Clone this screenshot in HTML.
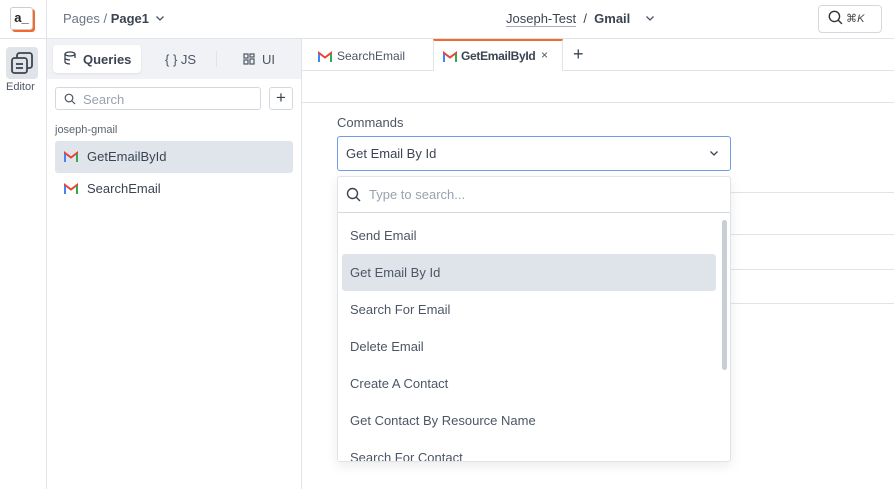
<!DOCTYPE html>
<html><head><style>
*{margin:0;padding:0;box-sizing:border-box}
body{width:894px;height:489px;overflow:hidden;background:#fff;font-family:"Liberation Sans",sans-serif;color:#4c5664;position:relative;font-size:13px}
.a{position:absolute}
.hl{position:absolute;background:#e0e3e8;height:1px}
.vl{position:absolute;background:#e0e3e8;width:1px}
.it{position:absolute;left:350px;font-size:13px;color:#4c5664}
</style></head><body>
<div class="hl" style="left:0;top:38px;width:894px"></div>
<div class="a" style="left:10px;top:7px;width:23px;height:23px;border:1px solid #ccc;border-radius:3px;background:#fff;box-shadow:2px 2px 0 #f26b2c;font-size:13px;font-weight:bold;color:#222;text-align:center;line-height:20px">a_</div>
<div class="vl" style="left:46px;top:0;height:489px"></div>
<div class="a" style="left:63px;top:11px;font-size:13px;color:#6a7585">Pages / <b style="color:#3b4452">Page1</b></div>
<svg class="a" style="left:155px;top:15px" width="10" height="7" viewBox="0 0 10 7"><path d="M1.5 1.5l3.5 3.5 3.5-3.5" fill="none" stroke="#4c5664" stroke-width="1.3"/></svg>
<div class="a" style="left:506px;top:11px;font-size:13px;color:#3b4452"><span style="border-bottom:1px solid #aab">Joseph-Test</span> &nbsp;/&nbsp; <b>Gmail</b></div>
<svg class="a" style="left:645px;top:15px" width="10" height="7" viewBox="0 0 10 7"><path d="M1.5 1.5l3.5 3.5 3.5-3.5" fill="none" stroke="#4c5664" stroke-width="1.3"/></svg>
<div class="a" style="left:818px;top:5px;width:64px;height:28px;border:1px solid #d5d9df;border-radius:4px;font-size:11px;color:#444;line-height:26px;padding-left:9px">
<svg width="15" height="15" viewBox="0 0 14 14" style="vertical-align:-3px"><circle cx="6" cy="6" r="4.8" fill="none" stroke="#333" stroke-width="1.3"/><line x1="9.5" y1="9.5" x2="13" y2="13" stroke="#333" stroke-width="1.3"/></svg> ⌘<i>K</i></div>
<div class="a" style="left:6px;top:47px;width:32px;height:32px;background:#e0e3e8;border-radius:4px"></div>
<svg class="a" style="left:10px;top:51px" width="24" height="24" viewBox="0 0 24 24" fill="none" stroke="#3b4452" stroke-width="1.8"><rect x="2" y="7" width="15" height="15" rx="2.5"/><path d="M7 7V4.5A2.5 2.5 0 0 1 9.5 2h10A2.5 2.5 0 0 1 22 4.5v10a2.5 2.5 0 0 1-2.5 2.5H17"/><line x1="6" y1="13" x2="13" y2="13"/><line x1="6" y1="17" x2="13" y2="17"/></svg>
<div class="a" style="left:6px;top:81px;font-size:11px;color:#4c5664">Editor</div>
<div class="vl" style="left:301px;top:38px;height:451px"></div>
<div class="a" style="left:47px;top:39px;width:254px;height:40px;background:#f0f2f5"></div>
<div class="a" style="left:53px;top:45px;width:88px;height:28px;background:#fff;border-radius:4px;box-shadow:0 1px 2px rgba(0,0,0,.08)"></div>
<svg class="a" style="left:64px;top:51px" width="14" height="14" viewBox="0 0 14 14" fill="none" stroke="#3b4452" stroke-width="1.3"><ellipse cx="6" cy="3" rx="5" ry="2"/><path d="M1 3v8c0 1.1 2.2 2 5 2M11 3v4M1 7c0 1.1 2.2 2 5 2"/></svg>
<div class="a" style="left:83px;top:52px;font-size:13px;font-weight:bold;color:#3b4452">Queries</div>
<div class="a" style="left:165px;top:52px;font-size:13px;color:#4c5664">{ } JS</div>
<div class="vl" style="left:216px;top:51px;height:16px"></div>
<svg class="a" style="left:243px;top:53px" width="12" height="12" viewBox="0 0 12 12" fill="none" stroke="#4c5664" stroke-width="1.2"><rect x="1" y="1" width="4" height="4"/><rect x="7" y="1" width="4" height="3"/><rect x="1" y="7" width="4" height="4"/><rect x="7" y="6" width="4" height="5"/></svg>
<div class="a" style="left:262px;top:52px;font-size:13px;color:#4c5664">UI</div>
<div class="a" style="left:55px;top:87px;width:206px;height:23px;border:1px solid #d5d9df;border-radius:3px"></div>
<svg class="a" style="left:64px;top:93px" width="12" height="12" viewBox="0 0 12 12" fill="none" stroke="#4c5664" stroke-width="1.2"><circle cx="5" cy="5" r="3.8"/><line x1="8" y1="8" x2="11" y2="11"/></svg>
<div class="a" style="left:83px;top:92px;font-size:13px;color:#99a2ae">Search</div>
<div class="a" style="left:269px;top:87px;width:24px;height:23px;border:1px solid #d5d9df;border-radius:3px;text-align:center;line-height:20px;font-size:17px;color:#3b4452">+</div>
<div class="a" style="left:55px;top:124px;font-size:11px;color:#5b6573">joseph-gmail</div>
<div class="a" style="left:55px;top:141px;width:238px;height:32px;background:#e0e5ec;border-radius:3px"></div>
<svg class="a" style="left:64px;top:151px" width="14" height="11" viewBox="0 0 14 11"><path d="M1 11V2l6 4.5L13 2v9" fill="none" stroke="#ea4335" stroke-width="2"/><path d="M1 3v8" stroke="#4285f4" stroke-width="2"/><path d="M13 3v8" stroke="#34a853" stroke-width="2"/></svg>
<div class="a" style="left:87px;top:149px;font-size:13px;color:#3b4452">GetEmailById</div>
<svg class="a" style="left:64px;top:183px" width="14" height="11" viewBox="0 0 14 11"><path d="M1 11V2l6 4.5L13 2v9" fill="none" stroke="#ea4335" stroke-width="2"/><path d="M1 3v8" stroke="#4285f4" stroke-width="2"/><path d="M13 3v8" stroke="#34a853" stroke-width="2"/></svg>
<div class="a" style="left:87px;top:181px;font-size:13px;color:#3b4452">SearchEmail</div>
<div class="hl" style="left:302px;top:70px;width:592px"></div>
<div class="a" style="left:433px;top:39px;width:130px;height:32px;background:#fff;border-left:1px solid #e0e3e8;border-right:1px solid #e0e3e8;border-top:2px solid #f26b2c"></div>
<svg class="a" style="left:318px;top:51px" width="14" height="11" viewBox="0 0 14 11"><path d="M1 11V2l6 4.5L13 2v9" fill="none" stroke="#ea4335" stroke-width="2"/><path d="M1 3v8" stroke="#4285f4" stroke-width="2"/><path d="M13 3v8" stroke="#34a853" stroke-width="2"/></svg>
<div class="a" style="left:337px;top:49px;font-size:12px;color:#4c5664">SearchEmail</div>
<svg class="a" style="left:443px;top:51px" width="14" height="11" viewBox="0 0 14 11"><path d="M1 11V2l6 4.5L13 2v9" fill="none" stroke="#ea4335" stroke-width="2"/><path d="M1 3v8" stroke="#4285f4" stroke-width="2"/><path d="M13 3v8" stroke="#34a853" stroke-width="2"/></svg>
<div class="a" style="left:461px;top:49px;font-size:12px;font-weight:bold;color:#3b4452;letter-spacing:-0.3px">GetEmailById</div>
<div class="a" style="left:541px;top:48px;font-size:12px;color:#4c5664">×</div>
<div class="a" style="left:573px;top:44px;font-size:18px;color:#3b4452">+</div>
<div class="hl" style="left:302px;top:102px;width:592px"></div>
<div class="a" style="left:337px;top:115px;font-size:13px;color:#4c5664">Commands</div>
<div class="a" style="left:337px;top:136px;width:394px;height:35px;border:1.5px solid #6f9be8;border-radius:3px"></div>
<div class="a" style="left:346px;top:146px;font-size:13px;color:#3b4452">Get Email By Id</div>
<svg class="a" style="left:709px;top:150px" width="10" height="7" viewBox="0 0 10 7"><path d="M1.5 1.5l3.5 3.5 3.5-3.5" fill="none" stroke="#3b4452" stroke-width="1.3"/></svg>
<div class="hl" style="left:731px;top:192px;width:163px"></div>
<div class="hl" style="left:731px;top:234px;width:163px"></div>
<div class="hl" style="left:731px;top:269px;width:163px"></div>
<div class="hl" style="left:731px;top:303px;width:163px"></div>
<div class="a" style="left:337px;top:176px;width:394px;height:286px;border:1px solid #e0e3e8;border-radius:3px;background:#fff;box-shadow:0 4px 12px rgba(0,0,0,.08);overflow:hidden">
<div class="hl" style="left:0;top:35px;width:394px;background:#d5d9df"></div>
<div class="a" style="left:4px;top:77px;width:374px;height:37px;background:#dfe4eb;border-radius:3px"></div>
<div class="a" style="left:384px;top:43px;width:5px;height:150px;background:#c8ced6;border-radius:3px"></div>
</div>
<svg class="a" style="left:346px;top:187px" width="15" height="15" viewBox="0 0 15 15" fill="none" stroke="#3b4452" stroke-width="1.4"><circle cx="6.5" cy="6.5" r="5"/><line x1="10" y1="10" x2="14" y2="14"/></svg>
<div class="a" style="left:369px;top:187px;font-size:13px;color:#99a2ae">Type to search...</div>
<div class="it" style="top:228px">Send Email</div>
<div class="it" style="top:265px">Get Email By Id</div>
<div class="it" style="top:302px">Search For Email</div>
<div class="it" style="top:339px">Delete Email</div>
<div class="it" style="top:376px">Create A Contact</div>
<div class="it" style="top:413px">Get Contact By Resource Name</div>
<div class="a" style="left:338px;top:447px;width:380px;height:14px;overflow:hidden"><div style="position:absolute;left:12px;top:3px;font-size:13px">Search For Contact</div></div>
</body></html>
